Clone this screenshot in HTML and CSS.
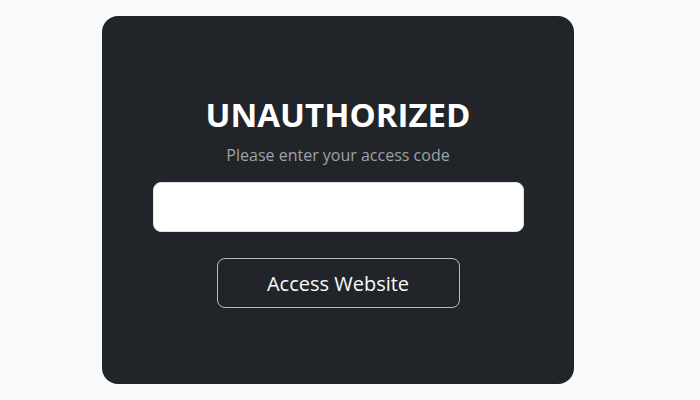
FILE: index.html
```html
<!DOCTYPE html>
<html>
<head>
<meta charset="utf-8">
<link rel="stylesheet" href="styles.css">
</head>
<body>
<div class="page">
  <div class="card">
    <h1 class="title">UNAUTHORIZED</h1>
    <p class="subtitle">Please enter your access code</p>
    <input class="code-input" type="password">
    <button class="access-btn">Access Website</button>
  </div>
</div>
</body>
</html>
```
FILE: styles.css
```css
html, body {
  margin: 0;
  padding: 0;
  background: #f8f9fa;
  font-family: "Open Sans", "Noto Sans", sans-serif;
}
.page {
  padding: 16px 0 0 102px;
}
.card {
  box-sizing: border-box;
  width: 472px;
  height: 368px;
  background: #212529;
  border-radius: 16px;
  display: flex;
  flex-direction: column;
  align-items: center;
  justify-content: flex-start;
  padding: 79px 51px 0 51px;
}
.title {
  margin: 0;
  color: #ffffff;
  font-size: 33px;
  font-weight: 700;
  line-height: 40px;
  letter-spacing: 0;
}
.subtitle {
  margin: 8px 0 0 0;
  color: #9fa2a6;
  font-size: 16px;
  line-height: 24px;
}
.code-input {
  box-sizing: border-box;
  margin-top: 15px;
  width: 371px;
  height: 50px;
  border: 1px solid #dee2e6;
  border-radius: 8px;
  background: #fff;
  outline: none;
}
.access-btn {
  box-sizing: border-box;
  margin-top: 26px;
  width: 243px;
  height: 50px;
  background: transparent;
  border: 1px solid #b9bcbf;
  border-radius: 8px;
  color: #f8f9fa;
  font-family: "Open Sans", "Noto Sans", sans-serif;
  font-size: 20px;
  cursor: pointer;
}
```
